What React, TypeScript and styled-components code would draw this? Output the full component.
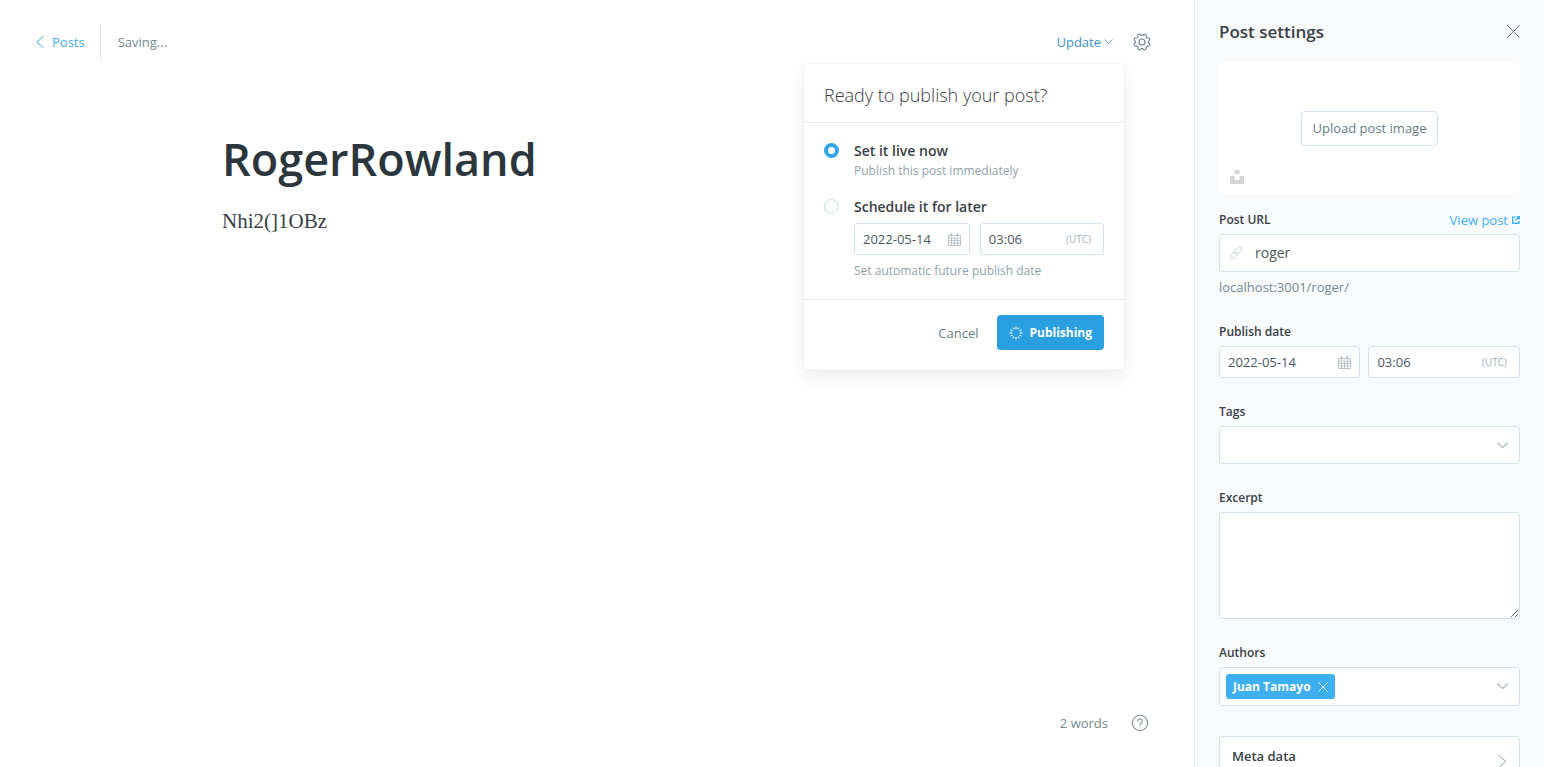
import React, { useState } from "react";
import styled, { createGlobalStyle, css } from "styled-components";

const sans = `"Open Sans", "Noto Sans", sans-serif`;
const ink = "#394047";
const dark = "#2b363d";
const muted = "#738a94";
const pale = "#8fa3ad";
const line = "#d3e1e9";
const hair = "#e4edf2";
const blue = "#3eb0ef";

const GlobalStyle = createGlobalStyle`
  *, *::before, *::after { box-sizing: border-box; }
  body { margin: 0; background: #fff; color: ${ink}; font: 13px/20px ${sans}; }
  button, input, select, textarea { font: inherit; color: inherit; margin: 0; }
`;

const Shell = styled.div`
  display: flex;
  height: 100vh;
  overflow: hidden;
`;

const Editor = styled.main`
  flex: 1;
  min-width: 0;
  display: flex;
  flex-direction: column;
`;

const TopBar = styled.header`
  display: flex;
  align-items: center;
  justify-content: space-between;
  padding: 24px 43px 0 36px;
`;

const BarSide = styled.div`
  display: flex;
  align-items: center;
  height: 36px;
`;

const BackLink = styled.a`
  display: flex;
  align-items: center;
  gap: 8px;
  height: 36px;
  padding-right: 15px;
  border-right: 1px solid #dfe9f0;
  color: ${blue};
  text-decoration: none;
`;

const SaveStatus = styled.span`
  padding-left: 17px;
  color: ${muted};
`;

const PublishMenu = styled.div`
  position: relative;
  display: flex;
  margin-right: 20px;
`;

const PlainButton = styled.button<{ $color?: string }>`
  display: flex;
  align-items: center;
  gap: 3px;
  padding: 0;
  border: 0;
  background: none;
  color: ${(p) => p.$color ?? muted};
  cursor: pointer;
`;

const Popover = styled.form`
  position: absolute;
  top: 32px;
  right: -11px;
  z-index: 2;
  width: 320px;
  border-radius: 4px;
  background: #fff;
  box-shadow: 0 0 0 1px rgba(99, 114, 130, 0.06), 0 8px 16px rgba(27, 39, 51, 0.08);
`;

const PopoverTitle = styled.h2`
  margin: 0;
  padding: 19px 20px 15px;
  border-bottom: 1px solid ${hair};
  font-size: 18px;
  font-weight: 300;
  line-height: 24px;
`;

const Options = styled.div`
  display: flex;
  flex-direction: column;
  gap: 16px;
  padding: 18px 20px;
  border-bottom: 1px solid ${hair};
`;

const Option = styled.div`
  display: grid;
  grid-template-columns: 15px 1fr;
  column-gap: 15px;
`;

const Radio = styled.input`
  appearance: none;
  width: 15px;
  height: 15px;
  margin-top: 2px;
  border: 1px solid #c5d9e6;
  border-radius: 50%;
  background: #fff;
  &:checked {
    border: 4px solid #34a5e8;
  }
`;

const OptionLabel = styled.label`
  font-size: 14px;
  font-weight: 600;
  line-height: 20px;
`;

const OptionHint = styled.p`
  grid-column: 2;
  margin: 0;
  color: ${pale};
  font-size: 12px;
  font-weight: 400;
  line-height: 20px;
`;

const DateRow = styled.div<{ $gap: number }>`
  display: grid;
  grid-template-columns: 14fr 15fr;
  gap: ${(p) => p.$gap}px;
`;

const OptionDates = styled.div`
  grid-column: 2;
  padding: 6px 0;
`;

const box = css`
  border: 1px solid ${line};
  border-radius: 3px;
  background: #fff;
`;

const DateBox = styled.div`
  ${box}
  display: flex;
  align-items: center;
  height: 32px;
  padding: 0 8px;
  color: #a3b3bc;
`;

const BareInput = styled.input`
  flex: 1;
  width: 100%;
  min-width: 0;
  padding: 0;
  border: 0;
  outline: 0;
  background: none;
  color: #4a5860;
`;

const Zone = styled.span`
  padding-right: 4px;
  color: #a3b3bc;
  font-size: 10px;
`;

const PopoverFooter = styled.footer`
  display: flex;
  justify-content: flex-end;
  gap: 19px;
  padding: 15px 20px 20px;
`;

const PublishButton = styled.button`
  display: flex;
  align-items: center;
  gap: 6px;
  height: 35px;
  padding: 0 12px;
  border: 0;
  border-radius: 4px;
  background: #2a9fe0;
  color: #fff;
  font-size: 12px;
  font-weight: 700;
`;

const Canvas = styled.article`
  flex: 1;
  width: 100%;
  max-width: 750px;
  margin: 0 auto;
  padding-top: 67px;
`;

const PostTitle = styled.h1`
  margin: 0;
  color: ${dark};
  font-size: 45px;
  font-weight: 600;
  line-height: 64px;
`;

const PostBody = styled.p`
  margin: 15px 0 0;
  font: 21px/30px Georgia, "Liberation Serif", serif;
`;

const StatusBar = styled.footer`
  display: flex;
  align-items: center;
  justify-content: flex-end;
  gap: 23px;
  padding: 0 45px 34px;
  color: ${muted};
`;

const Sidebar = styled.aside`
  flex: none;
  width: 350px;
  padding: 0 24px;
  overflow-y: auto;
  scrollbar-width: none;
  border-left: 1px solid #dfeaf2;
  background: #f8fafc;
`;

const SidebarHeader = styled.header`
  display: flex;
  align-items: center;
  justify-content: space-between;
  height: 63px;
`;

const SidebarTitle = styled.h2`
  margin: 0;
  font-size: 17px;
  font-weight: 600;
`;

const Uploader = styled.div`
  position: relative;
  display: flex;
  align-items: center;
  justify-content: center;
  height: 130px;
  margin-bottom: 17px;
  border-radius: 4px;
  background: #fff;
`;

const UploadButton = styled.button`
  ${box}
  height: 35px;
  padding: 0 11px;
  border-radius: 4px;
  color: #667d87;
`;

const UnsplashButton = styled.button`
  position: absolute;
  left: 11px;
  bottom: 9px;
  display: flex;
  padding: 0;
  border: 0;
  background: none;
`;

const Field = styled.div`
  display: flex;
  flex-direction: column;
  gap: 4px;
  margin-bottom: 24px;
`;

const LabelRow = styled.div`
  display: flex;
  align-items: center;
  justify-content: space-between;
`;

const Label = styled.label`
  font-size: 12px;
  font-weight: 600;
`;

const ViewLink = styled.a`
  display: flex;
  align-items: center;
  gap: 4px;
  color: ${blue};
  text-decoration: none;
`;

const UrlBox = styled.div`
  ${box}
  display: flex;
  align-items: center;
  gap: 12px;
  height: 38px;
  padding: 0 9px;
  font-size: 14px;
`;

const FieldHint = styled.p`
  margin: 0;
  color: ${muted};
  line-height: 22px;
`;

const SelectBox = styled.div`
  ${box}
  display: grid;
  align-items: center;
  height: 38px;
  & > * {
    grid-area: 1 / 1;
  }
  & > svg {
    justify-self: end;
    margin-right: 11px;
    pointer-events: none;
  }
`;

const Select = styled.select`
  appearance: none;
  width: 100%;
  height: 36px;
  padding: 0 32px 0 10px;
  border: 0;
  background: none;
`;

const TextArea = styled.textarea`
  ${box}
  display: block;
  width: 100%;
  height: 107px;
  padding: 8px 10px;
  resize: vertical;
`;

const TokenBox = styled.div`
  ${box}
  display: flex;
  align-items: center;
  gap: 8px;
  height: 39px;
  padding: 0 11px 0 6px;
`;

const Token = styled.span`
  display: flex;
  align-items: center;
  gap: 7px;
  height: 25px;
  padding: 0 7px;
  border-radius: 3px;
  background: ${blue};
  color: #fff;
  font-size: 12px;
  font-weight: 700;
`;

const MetaButton = styled.button`
  ${box}
  display: flex;
  justify-content: space-between;
  width: 100%;
  min-height: 60px;
  margin-top: 30px;
  padding: 9px 12px;
  text-align: left;
  & > svg {
    margin-top: 9px;
  }
`;

const MetaTitle = styled.span`
  font-weight: 600;
`;

const Stroke = ({ w, h, d, color, sw = 1 }: { w: number; h: number; d: string; color: string; sw?: number }) => (
  <svg width={w} height={h} viewBox={`0 0 ${w} ${h}`} fill="none" stroke={color} strokeWidth={sw} strokeLinecap="round" strokeLinejoin="round" aria-hidden="true">
    <path d={d} />
  </svg>
);

const Cross = ({ size, color }: { size: number; color: string }) => (
  <Stroke w={size} h={size} d={`M.5.5l${size - 1} ${size - 1}M${size - 0.5}.5l-${size - 1} ${size - 1}`} color={color} />
);

const ChevronDown = ({ color }: { color: string }) => <Stroke w={11} h={7} d="M.8 1l4.700 4.700L10.200 1" color={color} sw={1.2} />;

const gearPath = (() => {
  const points: string[] = [];
  for (let i = 0; i <= 96; i++) {
    const a = (i / 96) * Math.PI * 2;
    const wave = Math.tanh(1.8 * Math.cos(8 * a)) / Math.tanh(1.8);
    const r = 7.4 - 0.8 * wave;
    points.push(`${(9 + r * Math.sin(a)).toFixed(2)} ${(9 - r * Math.cos(a)).toFixed(2)}`);
  }
  return `M${points.join("L")}Z`;
})();

const Gear = () => (
  <svg width="18" height="18" viewBox="0 0 18 18" fill="none" stroke="#6d8490" strokeWidth="1.1" strokeLinejoin="round" aria-hidden="true">
    <path d={gearPath} />
    <circle cx="9" cy="9" r="3" />
  </svg>
);

const Calendar = () => (
  <svg width="13" height="13" viewBox="0 0 13 13" fill="none" stroke="#a9b8c0" aria-hidden="true">
    <path d="M.5 2.500h12v10H.5zM.5 5h12M3.500 5v7.500M6.500 5v7.500M9.500 5v7.500M.5 7.500h12M.5 10h12" strokeWidth=".8" />
    <path d="M3.500 0v3.500M9.500 0v3.500" strokeWidth="1.400" />
  </svg>
);

const LinkIcon = () => (
  <svg width="14" height="14" viewBox="0 0 14 14" fill="none" stroke="#ccdce5" strokeWidth="1" aria-hidden="true">
    <rect x="-4" y="-2.200" width="8" height="4.400" rx="2.200" transform="translate(9.300 4.700) rotate(-45)" />
    <rect x="-4" y="-2.200" width="8" height="4.400" rx="2.200" transform="translate(4.700 9.300) rotate(-45)" />
  </svg>
);

const External = () => (
  <svg width="8" height="8" viewBox="0 0 9 9" fill="none" stroke={blue} strokeWidth="1.500" aria-hidden="true">
    <path d="M4 1.200H.8v7h7V5.500M5.200.8h3v3M8 1L4 5" />
  </svg>
);

const Spinner = () => (
  <svg width="14" height="14" viewBox="-7 -7 14 14" stroke="#fff" strokeWidth="1.200" aria-hidden="true">
    {Array.from({ length: 12 }, (_, i) => (
      <path key={i} d="M0-6.500V-4" transform={`rotate(${i * 30})`} opacity={i % 3 === 0 ? 1 : 0.75} />
    ))}
  </svg>
);

const Help = () => (
  <svg width="18" height="18" viewBox="0 0 18 18" fill="none" stroke="#8096a1" strokeWidth="1.100" strokeLinecap="round" aria-hidden="true">
    <circle cx="9" cy="9" r="7.700" />
    <path d="M6.700 7.200a2.300 2.300 0 1 1 3.200 2.100c-.6.300-.9.700-.9 1.400M9 12.800v.1" />
  </svg>
);

const Unsplash = () => (
  <svg width="14" height="14" viewBox="0 0 14 14" fill="#d5d5d5" aria-hidden="true">
    <path d="M4.500 0h5v4h-5zM0 6h4.500v4h5V6H14v8H0z" />
  </svg>
);

const DateTime = ({ id, gap }: { id: string; gap: number }) => (
  <DateRow $gap={gap}>
    <DateBox>
      <BareInput id={id} aria-label="Date" defaultValue="2022-05-14" />
      <Calendar />
    </DateBox>
    <DateBox>
      <BareInput aria-label="Time" defaultValue="03:06" />
      <Zone>(UTC)</Zone>
    </DateBox>
  </DateRow>
);

export default function App() {
  const [mode, setMode] = useState("now");
  return (
    <Shell>
      <GlobalStyle />
      <Editor>
        <TopBar>
          <BarSide>
            <BackLink href="#posts">
              <Stroke w={8} h={12} d="M7.300.5L.8 6l6.500 5.500" color={blue} />
              Posts
            </BackLink>
            <SaveStatus>Saving...</SaveStatus>
          </BarSide>
          <BarSide>
            <PublishMenu>
              <PlainButton type="button" $color="#3a95cf">
                Update
                <Stroke w={9} h={6} d="M.7.8l3.800 4L8.300.8" color="#6aa5c8" />
              </PlainButton>
              <Popover>
                <PopoverTitle>Ready to publish your post?</PopoverTitle>
                <Options>
                  <Option>
                    <Radio type="radio" name="mode" id="now" checked={mode === "now"} onChange={() => setMode("now")} />
                    <OptionLabel htmlFor="now">Set it live now</OptionLabel>
                    <OptionHint>Publish this post immediately</OptionHint>
                  </Option>
                  <Option>
                    <Radio type="radio" name="mode" id="later" checked={mode === "later"} onChange={() => setMode("later")} />
                    <OptionLabel htmlFor="later">Schedule it for later</OptionLabel>
                    <OptionDates>
                      <DateTime id="schedule-date" gap={10} />
                    </OptionDates>
                    <OptionHint>Set automatic future publish date</OptionHint>
                  </Option>
                </Options>
                <PopoverFooter>
                  <PlainButton type="button" $color="#667d87">Cancel</PlainButton>
                  <PublishButton type="button">
                    <Spinner />
                    Publishing
                  </PublishButton>
                </PopoverFooter>
              </Popover>
            </PublishMenu>
            <PlainButton type="button" aria-label="Settings">
              <Gear />
            </PlainButton>
          </BarSide>
        </TopBar>
        <Canvas>
          <PostTitle>RogerRowland</PostTitle>
          <PostBody>Nhi2(]1OBz</PostBody>
        </Canvas>
        <StatusBar>
          <span>2 words</span>
          <PlainButton type="button" aria-label="Help">
            <Help />
          </PlainButton>
        </StatusBar>
      </Editor>
      <Sidebar>
        <SidebarHeader>
          <SidebarTitle>Post settings</SidebarTitle>
          <PlainButton type="button" aria-label="Close">
            <Cross size={13} color="#6b7880" />
          </PlainButton>
        </SidebarHeader>
        <Uploader>
          <UploadButton type="button">Upload post image</UploadButton>
          <UnsplashButton type="button" aria-label="Unsplash">
            <Unsplash />
          </UnsplashButton>
        </Uploader>
        <Field>
          <LabelRow>
            <Label htmlFor="url">Post URL</Label>
            <ViewLink href="#view">
              View post
              <External />
            </ViewLink>
          </LabelRow>
          <UrlBox>
            <LinkIcon />
            <BareInput id="url" defaultValue="roger" />
          </UrlBox>
          <FieldHint>localhost:3001/roger/</FieldHint>
        </Field>
        <Field>
          <Label htmlFor="publish-date">Publish date</Label>
          <DateTime id="publish-date" gap={8} />
        </Field>
        <Field>
          <Label htmlFor="tags">Tags</Label>
          <SelectBox>
            <Select id="tags" defaultValue="">
              <option value="" />
            </Select>
            <ChevronDown color="#a5b8c3" />
          </SelectBox>
        </Field>
        <Field>
          <Label htmlFor="excerpt">Excerpt</Label>
          <TextArea id="excerpt" />
        </Field>
        <Field>
          <Label htmlFor="authors">Authors</Label>
          <TokenBox>
            <Token>
              Juan Tamayo
              <PlainButton type="button" aria-label="Remove Juan Tamayo">
                <Cross size={10} color="#d5edfb" />
              </PlainButton>
            </Token>
            <BareInput id="authors" />
            <ChevronDown color="#a5b8c3" />
          </TokenBox>
        </Field>
        <MetaButton type="button">
          <MetaTitle>Meta data</MetaTitle>
          <Stroke w={9} h={13} d="M1 .7l7 5.800-7 5.800" color="#8ea3ae" />
        </MetaButton>
      </Sidebar>
    </Shell>
  );
}
